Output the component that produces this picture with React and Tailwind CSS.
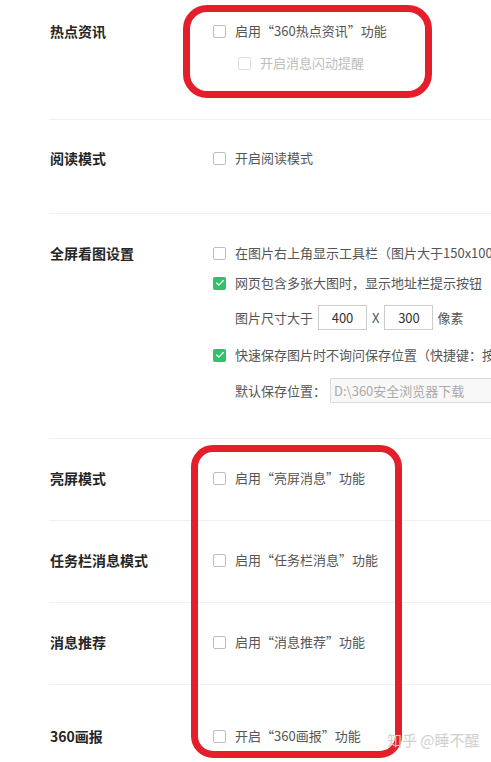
import { Check } from 'lucide-react'

const FONT = '"Noto Sans CJK SC", "Microsoft YaHei", "Noto Sans", sans-serif'

function Box({ checked, disabled }) {
  if (checked) {
    return (
      <span className="flex items-center justify-center w-[13px] h-[13px] rounded-[2px] bg-[#30c26b] shrink-0">
        <Check className="w-[10px] h-[10px] text-white" strokeWidth={3} />
      </span>
    )
  }
  return (
    <span
      className={`w-[13px] h-[13px] rounded-[2px] border bg-white shrink-0 ${
        disabled ? 'border-[#dedede]' : 'border-[#bdbdbd]'
      }`}
    />
  )
}

function Option({ label, checked, disabled, indent }) {
  return (
    <div className={`flex items-center h-[18px] whitespace-nowrap ${indent ? 'pl-[25px]' : ''}`}>
      <Box checked={checked} disabled={disabled} />
      <span className={`ml-[9px] text-[13px] ${disabled ? 'text-[#bdbdbd]' : 'text-[#555]'}`}>
        {label}
      </span>
    </div>
  )
}

function Section({ title, pt = 'pt-[30px]', pb = 'pb-[33px]', children }) {
  return (
    <div className={`flex ${pt} ${pb}`}>
      <div className="w-[213px] shrink-0 pl-[50px] h-[18px] flex items-center text-[14px] font-bold text-[#262626] whitespace-nowrap">
        {title}
      </div>
      <div className="flex flex-col">{children}</div>
    </div>
  )
}

function Divider() {
  return <div className="ml-[49px] h-px bg-[#f0f0f0]" />
}

export default function App() {
  return (
    <div
      className="relative w-[491px] h-[762px] overflow-hidden bg-white"
      style={{ fontFamily: FONT }}
    >
      <Section title="热点资讯" pt="pt-[22px]" pb="pb-[47px]">
        <Option label="启用“360热点资讯”功能" />
        <div className="h-[14px]" />
        <Option label="开启消息闪动提醒" disabled indent />
      </Section>
      <Divider />

      <Section title="阅读模式" pt="pt-[29px]" pb="pb-[46px]">
        <Option label="开启阅读模式" />
      </Section>
      <Divider />

      <Section title="全屏看图设置" pb="pb-[35px]">
        <Option label="在图片右上角显示工具栏（图片大于150x100像素时）" />
        <div className="h-[12px]" />
        <Option label="网页包含多张大图时，显示地址栏提示按钮" checked />
        <div className="h-[13px]" />
        <div className="flex items-center pl-[22px] text-[13px] text-[#555] whitespace-nowrap">
          <span>图片尺寸大于</span>
          <span className="ml-[5px] w-[49px] h-[25px] border border-[#cccccc] flex items-center justify-center text-[#333]">
            400
          </span>
          <span className="ml-[5px]">X</span>
          <span className="ml-[5px] w-[49px] h-[25px] border border-[#cccccc] flex items-center justify-center text-[#333]">
            300
          </span>
          <span className="ml-[4px]">像素</span>
        </div>
        <div className="h-[16px]" />
        <Option label="快速保存图片时不询问保存位置（快捷键：按住Ctrl点击图片）" checked />
        <div className="h-[14px]" />
        <div className="flex items-center pl-[22px] text-[13px] text-[#555] whitespace-nowrap">
          <span>默认保存位置：</span>
          <span className="ml-[4px] w-[220px] h-[25px] border border-[#dcdcdc] bg-[#f8f8f8] flex items-center pl-[3px] text-[#aaa]">
            D:\360安全浏览器下载
          </span>
        </div>
      </Section>
      <Divider />

      <Section title="亮屏模式">
        <Option label="启用“亮屏消息”功能" />
      </Section>
      <Divider />

      <Section title="任务栏消息模式">
        <Option label="启用“任务栏消息”功能" />
      </Section>
      <Divider />

      <Section title="消息推荐">
        <Option label="启用“消息推荐”功能" />
      </Section>
      <Divider />

      <Section title="360画报" pt="pt-[42px]">
        <Option label="开启“360画报”功能" />
      </Section>

      {/* red annotation marks */}
      <div className="absolute left-[183px] top-[5px] w-[249px] h-[93px] border-[7px] border-[#e41e2b] rounded-[24px]" />
      <div className="absolute left-[191px] top-[445px] w-[211px] h-[313px] border-[7px] border-[#e41e2b] rounded-[22px]" />

      {/* watermark */}
      <div className="absolute left-[387px] top-[729px] text-[15px] text-[#cfcfcf] whitespace-nowrap">
        知乎 @睡不醒
      </div>
    </div>
  )
}
